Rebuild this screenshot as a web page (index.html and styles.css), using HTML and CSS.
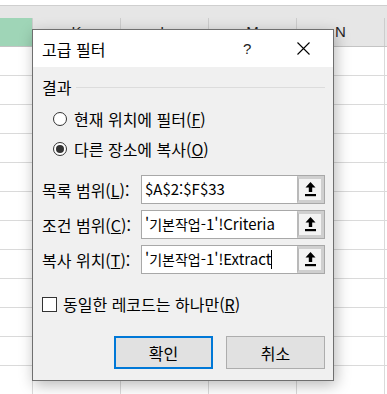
FILE: index.html
```html
<!DOCTYPE html>
<html lang="ko">
<head>
    <meta charset="UTF-8">
    <title>고급 필터</title>
    <link rel="stylesheet" href="styles.css">
</head>
<body>
    <div class="sheet">
        <div class="top-strip"></div>
        <div class="formula-gap"></div>
        <div class="col-head">
            <div class="hcell first"></div>
            <div class="hcell">K</div>
            <div class="hcell">L</div>
            <div class="hcell">M</div>
            <div class="hcell">N</div>
        </div>
        <div class="rows" id="rows"></div>
    </div>

    <div class="dialog">
        <div class="title-bar">
            <span class="title">고급 필터</span>
            <span class="help">?</span>
            <span class="close">
                <svg width="13" height="13" viewBox="0 0 13 13"><path d="M0.5 0.5 L12.5 12.5 M12.5 0.5 L0.5 12.5" stroke="#000" stroke-width="1.1" fill="none"/></svg>
            </span>
        </div>
        <div class="dlg-body">
            <div class="group-head">
                <span>결과</span>
                <span class="group-line"></span>
            </div>
            <div class="radios">
                <div class="radio-row"><span class="radio"></span>현재 위치에 필터(<u>F</u>)</div>
                <div class="radio-row"><span class="radio on"></span>다른 장소에 복사(<u>O</u>)</div>
            </div>
            <div class="fields">
                <div class="field-row">
                    <span class="field-label">목록 범위(<u>L</u>):</span>
                    <div class="field">
                        <span class="field-text">$A$2:$F$33</span>
                        <span class="pick"><svg width="11" height="15" viewBox="0 0 11 15"><path d="M5.5 0 L10.5 5.5 L7.2 5.5 L7.2 10 L3.8 10 L3.8 5.5 L0.5 5.5 Z" fill="#000"/><rect x="0" y="12" width="11" height="2.2" fill="#000"/></svg></span>
                    </div>
                </div>
                <div class="field-row">
                    <span class="field-label">조건 범위(<u>C</u>):</span>
                    <div class="field">
                        <span class="field-text">'<span class="ko">기본작업</span>-1'!Criteria</span>
                        <span class="pick"><svg width="11" height="15" viewBox="0 0 11 15"><path d="M5.5 0 L10.5 5.5 L7.2 5.5 L7.2 10 L3.8 10 L3.8 5.5 L0.5 5.5 Z" fill="#000"/><rect x="0" y="12" width="11" height="2.2" fill="#000"/></svg></span>
                    </div>
                </div>
                <div class="field-row">
                    <span class="field-label">복사 위치(<u>T</u>):</span>
                    <div class="field">
                        <span class="field-text">'<span class="ko">기본작업</span>-1'!Extract<span class="caret"></span></span>
                        <span class="pick"><svg width="11" height="15" viewBox="0 0 11 15"><path d="M5.5 0 L10.5 5.5 L7.2 5.5 L7.2 10 L3.8 10 L3.8 5.5 L0.5 5.5 Z" fill="#000"/><rect x="0" y="12" width="11" height="2.2" fill="#000"/></svg></span>
                    </div>
                </div>
            </div>
            <div class="check-row"><span class="checkbox"></span>동일한 레코드는 하나만(<u>R</u>)</div>
            <div class="buttons">
                <button class="btn default">확인</button>
                <button class="btn">취소</button>
            </div>
        </div>
    </div>

    <script>
        let rows = document.getElementById("rows");
        for (let i = 0; i < 12; i++) {
            let row = document.createElement("div");
            row.className = "row";
            for (let j = 0; j < 5; j++) {
                let cell = document.createElement("div");
                cell.className = j === 0 ? "cell first" : "cell";
                row.appendChild(cell);
            }
            rows.appendChild(row);
        }
    </script>
</body>
</html>
```

FILE: styles.css
```css
body {
    margin: 0;
    width: 387px;
    height: 394px;
    overflow: hidden;
    position: relative;
    background: #fff;
    font-family: "Noto Sans CJK KR", "Noto Sans", sans-serif;
    font-size: 16px;
    color: #000;
}
.sheet {
    width: 387px;
}
.top-strip {
    height: 5px;
    background: #fff;
    border-bottom: 1px solid #cfcfcf;
}
.formula-gap {
    height: 12px;
    background: #e6e6e6;
}
.col-head {
    display: flex;
    height: 29px;
    background: #e6e6e6;
    border-bottom: 1px solid #c4c4c4;
    box-sizing: border-box;
}
.hcell {
    flex: none;
    width: 88px;
    box-sizing: border-box;
    border-right: 1px solid #cdcdcd;
    text-align: center;
    line-height: 28px;
    font-family: "Liberation Sans", Arial, sans-serif;
    font-size: 15px;
    color: #262626;
}
.hcell.first {
    width: 33px;
    background: #9fd5b7;
}
.row {
    display: flex;
    height: 29px;
    box-sizing: border-box;
    border-bottom: 1px solid #dadada;
}
.cell {
    flex: none;
    width: 88px;
    box-sizing: border-box;
    border-right: 1px solid #dadada;
}
.cell.first {
    width: 33px;
}

/* dialog */
.dialog {
    position: absolute;
    left: 32px;
    top: 29px;
    width: 302px;
    height: 352px;
    box-sizing: border-box;
    border: 1px solid #6f6f6f;
    background: #f0f0f0;
    box-shadow: 2px 4px 14px rgba(0, 0, 0, 0.28);
    display: flex;
    flex-direction: column;
}
.title-bar {
    height: 37px;
    background: #fff;
    display: flex;
    align-items: center;
    padding-left: 9px;
}
.title {
    flex: 1;
    line-height: 20px;
}
.help {
    width: 54px;
    font-family: "Liberation Sans", Arial, sans-serif;
    font-size: 15px;
    color: #222;
}
.close {
    width: 36px;
    display: flex;
    align-items: center;
}
.dlg-body {
    padding: 10px 8px 0 9px;
    line-height: 20px;
}
.group-head {
    display: flex;
    align-items: center;
    height: 20px;
}
.group-line {
    flex: 1;
    margin-left: 5px;
    border-top: 1px solid #dcdcdc;
}
.radios {
    margin-top: 7px;
    padding-left: 11px;
}
.radio-row {
    height: 30px;
    display: flex;
    align-items: center;
}
.radio {
    width: 14px;
    height: 14px;
    border: 1px solid #333;
    border-radius: 50%;
    background: #fff;
    margin-right: 7px;
    position: relative;
    box-sizing: border-box;
}
.radio.on::after {
    content: "";
    position: absolute;
    left: 2px;
    top: 2px;
    width: 8px;
    height: 8px;
    border-radius: 50%;
    background: #333;
}
.fields {
    margin-top: 11px;
    display: flex;
    flex-direction: column;
    gap: 6px;
}
.field-row {
    display: flex;
    align-items: center;
    height: 29px;
}
.field-label {
    width: 99px;
    flex: none;
}
.field {
    width: 184px;
    height: 29px;
    box-sizing: border-box;
    border: 1px solid #a8a8a8;
    background: #fff;
    display: flex;
}
.field-text {
    flex: 1;
    padding-left: 3px;
    font-size: 15px;
    line-height: 26px;
    white-space: nowrap;
    overflow: hidden;
}
.ko {
    font-size: 14px;
}
.caret {
    display: inline-block;
    width: 1px;
    height: 19px;
    background: #000;
    vertical-align: -4px;
}
.pick {
    width: 27px;
    box-sizing: border-box;
    border: 3px solid #cfcfcf;
    border-left: 2px solid #b9b9b9;
    background: #f3f3f3;
    display: flex;
    align-items: center;
    justify-content: center;
}
.check-row {
    margin-top: 20px;
    height: 20px;
    display: flex;
    align-items: center;
}
.checkbox {
    width: 15px;
    height: 15px;
    box-sizing: border-box;
    border: 1px solid #333;
    background: #fff;
    margin-right: 6px;
}
.buttons {
    margin-top: 22px;
    display: flex;
    justify-content: flex-end;
    gap: 13px;
}
.btn {
    width: 99px;
    height: 33px;
    box-sizing: border-box;
    border: 1px solid #adadad;
    background: #e1e1e1;
    font-family: "Noto Sans CJK KR", sans-serif;
    font-size: 16px;
    color: #000;
    padding: 0;
}
.btn.default {
    border: 2px solid #0078d7;
}
```
